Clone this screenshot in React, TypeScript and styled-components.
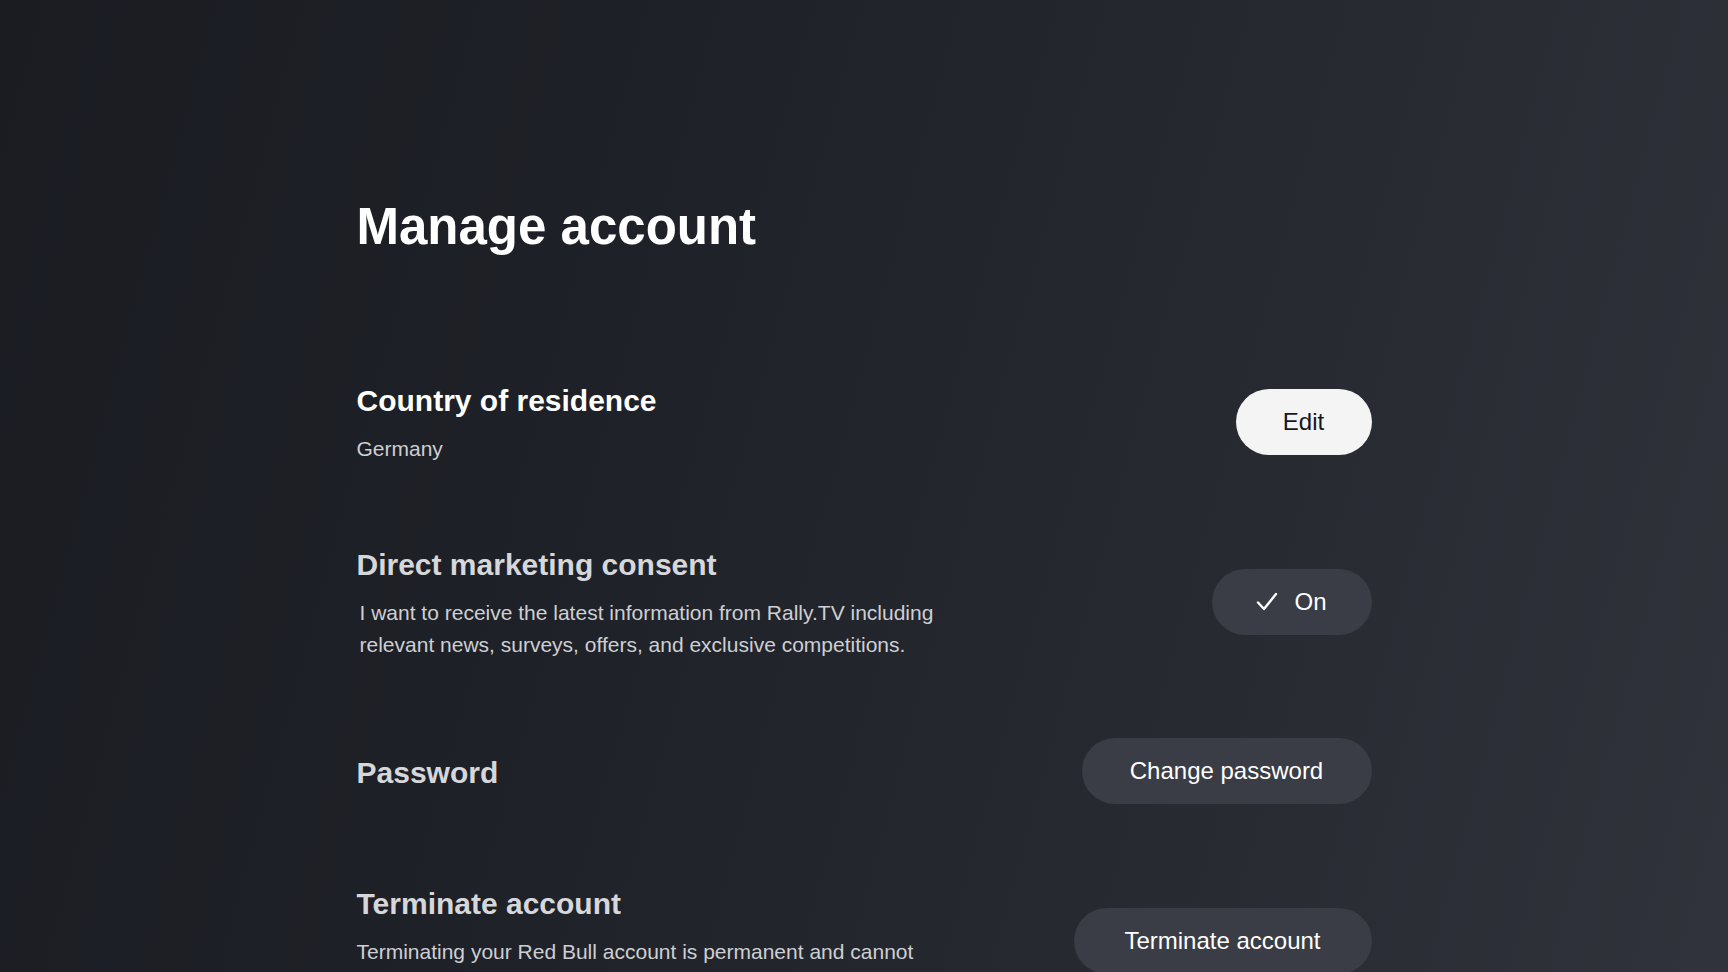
import React from "react";
import styled, { createGlobalStyle } from "styled-components";

const GlobalStyle = createGlobalStyle`
  html, body {
    margin: 0;
    padding: 0;
    height: 100%;
    background: #1c1e24;
  }
  body {
    font-family: "Liberation Sans", Arial, sans-serif;
    overflow: hidden;
  }
  #root { min-height: 100%; }
`;

const Page = styled.div`
  min-height: 972px;
  height: 972px;
  box-sizing: border-box;
  padding-top: 199px;
  background: linear-gradient(105deg, #1a1c22 0%, #1f2128 35%, #272a31 70%, #30333b 100%);
  color: #fff;
  overflow: hidden;
`;

const Container = styled.main`
  width: 1015px;
  margin: 0 auto;
  display: flex;
  flex-direction: column;
`;

const Title = styled.h1`
  margin: 0 0 126px;
  font-size: 51px;
  line-height: 56px;
  font-weight: 700;
  color: #ffffff;
`;

const Sections = styled.div`
  display: flex;
  flex-direction: column;
  gap: 80px;
`;

const Row = styled.section`
  display: flex;
  justify-content: space-between;
  align-items: center;
`;

const Info = styled.div`
  display: flex;
  flex-direction: column;
  gap: 12px;
  max-width: 580px;
`;

const Heading = styled.h2<{ $bright?: boolean }>`
  margin: 0;
  font-size: 30px;
  line-height: 40px;
  font-weight: 700;
  color: ${(p) => (p.$bright ? "#ffffff" : "#d6d7da")};
`;

const Text = styled.p<{ $indent?: boolean }>`
  margin: 0;
  font-size: 21px;
  line-height: 32px;
  color: #cdcfd3;
  padding-left: ${(p) => (p.$indent ? "3px" : "0")};
`;

const Button = styled.button<{ $primary?: boolean; $w: number }>`
  display: inline-flex;
  align-items: center;
  justify-content: center;
  gap: 16px;
  width: ${(p) => p.$w}px;
  height: 66px;
  padding: 0;
  margin-top: -3px;
  border: none;
  border-radius: 33px;
  font-family: "Liberation Sans", Arial, sans-serif;
  font-size: 24px;
  font-weight: 400;
  cursor: pointer;
  background: ${(p) => (p.$primary ? "#f4f4f5" : "#3a3d45")};
  color: ${(p) => (p.$primary ? "#16181c" : "#ffffff")};
`;

const CheckIcon = () => (
  <svg width="22" height="20" viewBox="0 0 22 20" fill="none">
    <path d="M2 10.5 L8 17 L20 2" stroke="#ffffff" strokeWidth="2.4" strokeLinecap="round" strokeLinejoin="round" />
  </svg>
);

export default function App() {
  return (
    <>
      <GlobalStyle />
      <Page>
        <Container>
          <Title>Manage account</Title>
          <Sections>
            <Row>
              <Info>
                <Heading $bright>Country of residence</Heading>
                <Text>Germany</Text>
              </Info>
              <Button $primary $w={136}>Edit</Button>
            </Row>
            <Row>
              <Info>
                <Heading>Direct marketing consent</Heading>
                <Text $indent>
                  I want to receive the latest information from Rally.TV including relevant news, surveys, offers, and exclusive competitions.
                </Text>
              </Info>
              <Button $w={160}>
                <CheckIcon />
                On
              </Button>
            </Row>
            <Row>
              <Info>
                <Heading>Password</Heading>
              </Info>
              <Button $w={290}>Change password</Button>
            </Row>
            <Row>
              <Info>
                <Heading>Terminate account</Heading>
                <Text>
                  Terminating your Red Bull account is permanent and cannot be undone. All of your data will be deleted.
                </Text>
              </Info>
              <Button $w={298}>Terminate account</Button>
            </Row>
          </Sections>
        </Container>
      </Page>
    </>
  );
}
